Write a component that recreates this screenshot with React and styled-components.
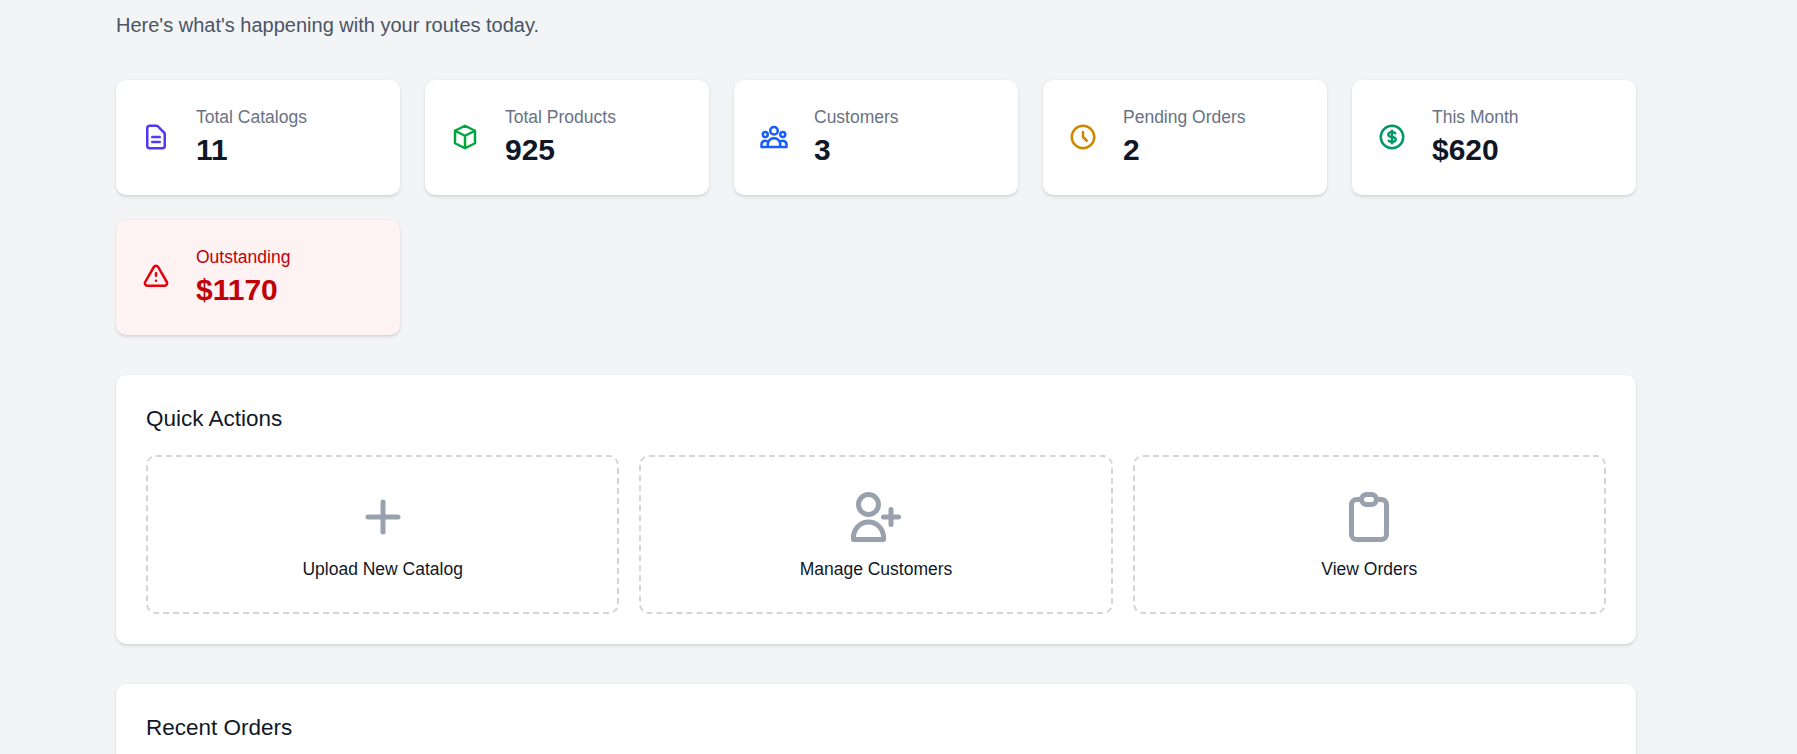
import React from "react";
import styled, { createGlobalStyle } from "styled-components";
import {
  HiOutlineDocumentText,
  HiOutlineCube,
  HiOutlineUserGroup,
  HiOutlineClock,
  HiOutlineCurrencyDollar,
  HiOutlineExclamation,
  HiOutlineUserAdd,
  HiOutlineClipboard,
} from "react-icons/hi";

const Global = createGlobalStyle`
  html, body { margin: 0; height: 100%; overflow: hidden; background: #f3f4f6; }
  body { font-family: "Liberation Sans", Arial, sans-serif; }
  * { box-sizing: border-box; }
`;

const Page = styled.main`
  width: 1520px;
  margin-left: 116px;
  padding-top: 10px;
  display: flex;
  flex-direction: column;
`;

const Subtitle = styled.p`
  margin: 0 0 40px;
  font-size: 20px;
  line-height: 30px;
  color: #4a5565;
`;

const StatGrid = styled.section`
  display: grid;
  grid-template-columns: repeat(5, 1fr);
  gap: 25px;
  margin-bottom: 40px;
`;

const StatCard = styled.article`
  display: flex;
  align-items: center;
  gap: 25px;
  padding: 25px;
  border-radius: 10px;
  background: ${(p) => (p.$alert ? "#fef2f2" : "#ffffff")};
  box-shadow: 0 1.25px 3.75px rgba(0, 0, 0, 0.1), 0 1.25px 2.5px -1.25px rgba(0, 0, 0, 0.1);
`;

const StatIcon = styled.span`
  display: flex;
  flex: none;
  margin-bottom: 2px;
  color: ${(p) => p.$color};
  font-size: 30px;
`;

const StatText = styled.div`
  display: flex;
  flex-direction: column;
`;

const StatLabel = styled.span`
  font-size: 17.5px;
  line-height: 25px;
  color: ${(p) => (p.$alert ? "#c10007" : "#6a7282")};
`;

const StatValue = styled.span`
  font-size: 30px;
  line-height: 40px;
  font-weight: 700;
  color: ${(p) => (p.$alert ? "#c10007" : "#101828")};
`;

const Panel = styled.section`
  padding: 30px;
  border-radius: 10px;
  background: #ffffff;
  margin-bottom: 40px;
  box-shadow: 0 1.25px 3.75px rgba(0, 0, 0, 0.1), 0 1.25px 2.5px -1.25px rgba(0, 0, 0, 0.1);
`;

const PanelTitle = styled.h2`
  margin: 0 0 22px;
  font-size: 22.5px;
  line-height: 28px;
  font-weight: 400;
  color: #101828;
`;

const ActionGrid = styled.div`
  display: grid;
  grid-template-columns: repeat(3, 1fr);
  gap: 20px;
`;

const ActionCard = styled.button`
  display: flex;
  flex-direction: column;
  align-items: center;
  padding: 30px;
  border: 2px dashed #d1d5dc;
  border-radius: 10px;
  background: transparent;
  font: inherit;
  color: #101828;
`;

const ActionIcon = styled.span`
  display: flex;
  color: #99a1af;
  font-size: 60px;
`;

const ActionLabel = styled.span`
  margin-top: 10px;
  font-size: 17.5px;
  line-height: 25px;
`;

const PlusIcon = () => (
  <svg width="1em" height="1em" viewBox="0 0 24 24" fill="none" stroke="currentColor" strokeWidth="2" strokeLinecap="round" strokeLinejoin="round">
    <path d="M12 6v6m0 0v6m0-6h6m-6 0H6" />
  </svg>
);

const stats = [
  { label: "Total Catalogs", value: "11", Icon: HiOutlineDocumentText, color: "#4f39f6" },
  { label: "Total Products", value: "925", Icon: HiOutlineCube, color: "#00a63e" },
  { label: "Customers", value: "3", Icon: HiOutlineUserGroup, color: "#155dfc" },
  { label: "Pending Orders", value: "2", Icon: HiOutlineClock, color: "#d08700" },
  { label: "This Month", value: "$620", Icon: HiOutlineCurrencyDollar, color: "#009966" },
  { label: "Outstanding", value: "$1170", Icon: HiOutlineExclamation, color: "#e7000b", alert: true },
];

const actions = [
  { label: "Upload New Catalog", Icon: PlusIcon },
  { label: "Manage Customers", Icon: HiOutlineUserAdd },
  { label: "View Orders", Icon: HiOutlineClipboard },
];

export default function App() {
  return (
    <>
      <Global />
      <Page>
        <Subtitle>Here's what's happening with your routes today.</Subtitle>
        <StatGrid>
          {stats.map(({ label, value, Icon, color, alert }) => (
            <StatCard key={label} $alert={alert}>
              <StatIcon $color={color}>
                <Icon />
              </StatIcon>
              <StatText>
                <StatLabel $alert={alert}>{label}</StatLabel>
                <StatValue $alert={alert}>{value}</StatValue>
              </StatText>
            </StatCard>
          ))}
        </StatGrid>
        <Panel>
          <PanelTitle>Quick Actions</PanelTitle>
          <ActionGrid>
            {actions.map(({ label, Icon }) => (
              <ActionCard key={label}>
                <ActionIcon>
                  <Icon />
                </ActionIcon>
                <ActionLabel>{label}</ActionLabel>
              </ActionCard>
            ))}
          </ActionGrid>
        </Panel>
        <Panel>
          <PanelTitle>Recent Orders</PanelTitle>
        </Panel>
      </Page>
    </>
  );
}
